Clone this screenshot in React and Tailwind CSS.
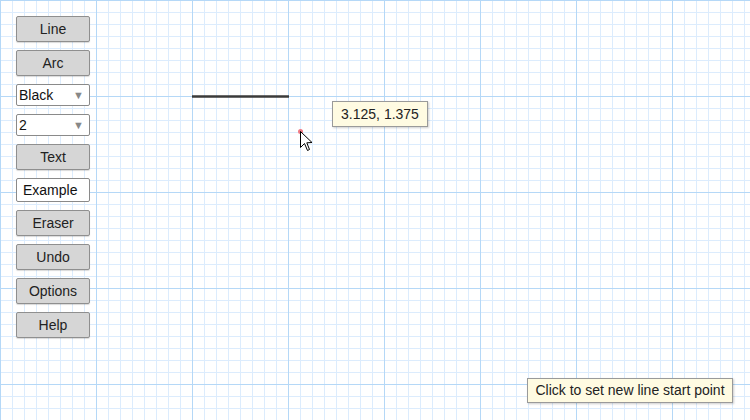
const tools = ["Line", "Arc"];
const tools2 = ["Eraser", "Undo", "Options", "Help"];

function Btn({ children }) {
  return (
    <button className="h-[26px] w-[74px] rounded-[2px] border border-[#8f8f8f] bg-[#d6d6d6] text-[14px] text-[#222] shadow-[0_1px_1px_rgba(0,0,0,0.15)]">
      {children}
    </button>
  );
}

function Select({ value }) {
  return (
    <div className="flex h-[22px] w-[74px] items-center justify-between rounded-[2px] border border-[#8a8a8a] bg-white pl-[2px] pr-[5px] text-[14px] text-[#111]">
      <span>{value}</span>
      <span className="text-[11px] text-[#888]">▼</span>
    </div>
  );
}

function Grid() {
  return (
    <svg className="absolute inset-0" width="750" height="420">
      <defs>
        <pattern id="minor" width="12" height="12" patternUnits="userSpaceOnUse">
          <path d="M0 0.5H12M0.5 0V12" stroke="#dcecfd" strokeWidth="1" fill="none" />
        </pattern>
        <pattern id="major" width="96" height="96" patternUnits="userSpaceOnUse">
          <path d="M0 0.5H96M0.5 0V96" stroke="#b5d8f7" strokeWidth="1" fill="none" />
        </pattern>
      </defs>
      <rect width="750" height="420" fill="#fff" />
      <rect width="750" height="420" fill="url(#minor)" />
      <rect width="750" height="420" fill="url(#major)" />
      <line x1="192" y1="96.5" x2="289" y2="96.5" stroke="#3a3a3a" strokeWidth="2.5" />
      <circle cx="300.5" cy="131.5" r="2.5" fill="#f07a84" />
      <path
        d="M300.5 131.5 L300.5 147.5 L304.5 143.5 L307.5 150.5 L309.5 149.5 L306.8 142.8 L312 142.5 Z"
        fill="#fff"
        stroke="#000"
        strokeWidth="1"
        strokeLinejoin="round"
      />
    </svg>
  );
}

export default function App() {
  return (
    <div className="relative h-[420px] w-[750px] overflow-hidden bg-white font-['Liberation_Sans',Arial,sans-serif]">
      <Grid />
      <div className="absolute left-4 top-4 flex w-[74px] flex-col gap-2">
        {tools.map((t) => (
          <Btn key={t}>{t}</Btn>
        ))}
        <Select value="Black" />
        <Select value="2" />
        <Btn>Text</Btn>
        <div className="flex h-[24px] w-[74px] items-center rounded-[2px] border border-[#8a8a8a] bg-white px-[6px] text-[14px] text-[#111]">
          Example
        </div>
        {tools2.map((t) => (
          <Btn key={t}>{t}</Btn>
        ))}
      </div>
      <div className="absolute left-[332px] top-[101px] flex h-[26px] w-[96px] items-center justify-center border border-[#9a9a9a] bg-[#fffbe2] text-[14px] text-[#222] shadow-[1px_1px_2px_rgba(0,0,0,0.2)]">
        3.125, 1.375
      </div>
      <div className="absolute left-[527px] top-[378px] flex h-[25px] w-[206px] items-center justify-center border border-[#9a9a9a] bg-[#fffbe2] text-[14px] text-[#222] shadow-[1px_1px_2px_rgba(0,0,0,0.2)]">
        Click to set new line start point
      </div>
    </div>
  );
}
